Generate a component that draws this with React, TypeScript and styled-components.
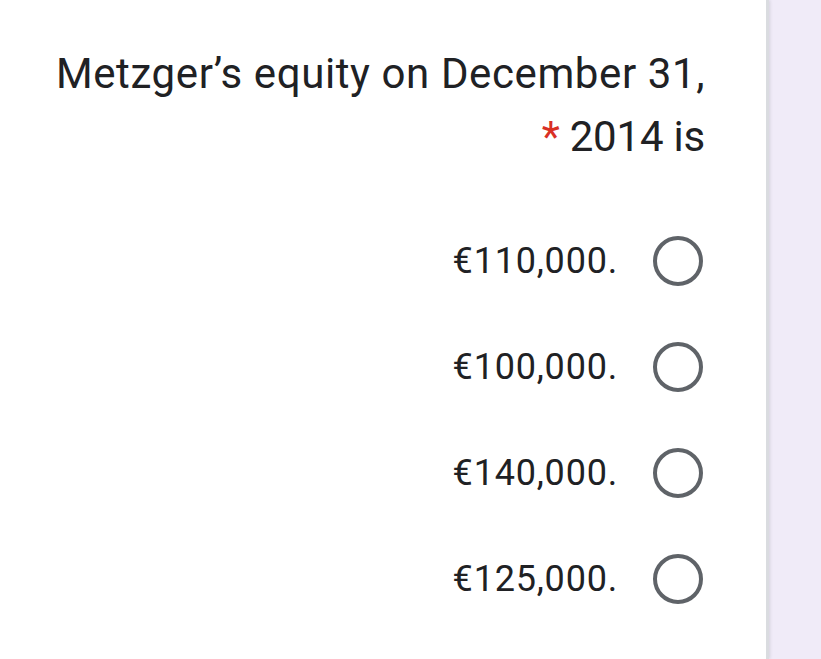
import React from "react";
import styled, { createGlobalStyle } from "styled-components";

const Global = createGlobalStyle`
  html, body { margin: 0; padding: 0; background: #f0ebf8; }
  body { font-family: Roboto, "Noto Sans", sans-serif; }
`;

const Page = styled.div`
  display: flex;
  width: 821px;
  height: 659px;
  background: #f0ebf8;
  overflow: hidden;
`;

const Card = styled.div`
  width: 769px;
  height: 659px;
  background: #ffffff;
  border-right: 3px solid #dadce0;
  box-shadow: 1px 0 3px rgba(60, 64, 67, 0.15);
  box-sizing: border-box;
  display: flex;
  flex-direction: column;
  align-items: flex-end;
  padding-right: 63px;
`;

const Title = styled.div`
  margin-top: 42px;
  margin-right: -2px;
  font-family: Roboto, "Open Sans", sans-serif;
  font-size: 42px;
  line-height: 63px;
  color: #202124;
  text-align: right;
  letter-spacing: 0.6px;
`;

const LastLine = styled.span`
  letter-spacing: -0.2px;
`;

const Required = styled.span`
  color: #d93025;
  margin-right: 10px;
`;

const Options = styled.div`
  margin-top: 68px;
  display: flex;
  flex-direction: column;
  align-items: flex-end;
  gap: 56px;
`;

const Option = styled.label`
  display: flex;
  align-items: center;
  gap: 35px;
  height: 50px;
  font-size: 36px;
  letter-spacing: 0.8px;
  color: #202124;
`;

const Radio = styled.span`
  width: 50px;
  height: 50px;
  border-radius: 50%;
  border: 4px solid #5f6368;
  box-sizing: border-box;
`;

const options = ["€110,000.", "€100,000.", "€140,000.", "€125,000."];

export default function App() {
  return (
    <>
      <Global />
      <Page>
        <Card>
          <Title>
            Metzger’s equity on December 31,
            <br />
            <LastLine>
              <Required>*</Required>2014 is
            </LastLine>
          </Title>
          <Options>
            {options.map((o) => (
              <Option key={o}>
                <span>{o}</span>
                <Radio />
              </Option>
            ))}
          </Options>
        </Card>
      </Page>
    </>
  );
}
